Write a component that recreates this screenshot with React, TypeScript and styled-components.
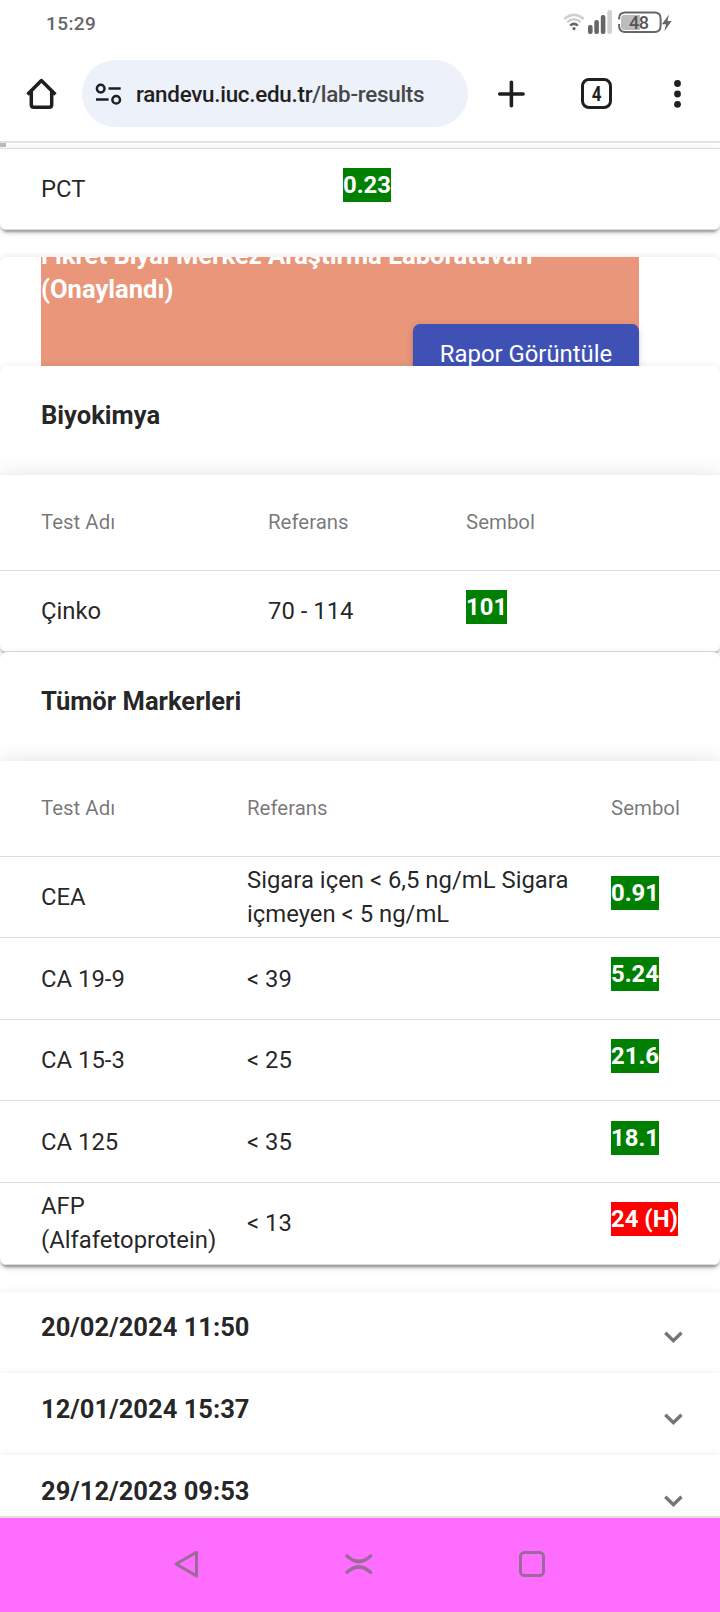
import React from 'react';
import styled, { createGlobalStyle } from 'styled-components';

const GlobalStyle = createGlobalStyle`
  * { box-sizing: border-box; }
  html, body { margin: 0; padding: 0; background: #fff; }
  body { font-family: Roboto, "Liberation Sans", sans-serif; color: rgba(0, 0, 0, 0.87); }
`;

const Screen = styled.div`
  display: flex;
  flex-direction: column;
  width: 720px;
  height: 1612px;
  overflow: hidden;
  background: #fff;
`;

const StatusBar = styled.div`
  display: flex;
  justify-content: space-between;
  height: 45px;
  padding: 0 46px 0 46px;
  flex: none;
`;

const Clock = styled.div`
  font-size: 19px;
  font-weight: 500;
  line-height: 47px;
  letter-spacing: 0.4px;
  color: #666;
`;

const StatusIcons = styled.div`
  display: flex;
  align-items: flex-start;
  padding-top: 8px;
`;

const Battery = styled.div`
  position: relative;
  width: 56px;
  height: 28px;
  margin-left: 5px;
`;

const BatteryLevel = styled.span`
  position: absolute;
  left: 11px;
  top: 0;
  font-size: 18px;
  font-weight: 500;
  line-height: 30px;
  letter-spacing: -0.5px;
  color: #555;
`;

const Toolbar = styled.div`
  display: flex;
  align-items: center;
  height: 98px;
  padding: 1px 0 0 24px;
  flex: none;
  border-bottom: 2px solid #e1e2e1;
`;

const AddressBar = styled.div`
  display: flex;
  align-items: center;
  width: 386px;
  height: 67px;
  margin: 0 26px 0 22px;
  padding-left: 12px;
  border-radius: 34px;
  background: #ecf1fa;
`;

const Url = styled.div`
  margin-left: 12px;
  font-size: 22.4px;
  font-weight: 500;
  line-height: 30px;
  letter-spacing: -0.26px;
  white-space: nowrap;
  color: #1f1f1f;
`;

const UrlPath = styled.span`
  color: #454846;
`;

const TabCount = styled.div`
  display: flex;
  align-items: center;
  justify-content: center;
  width: 31px;
  height: 31px;
  margin: 0 61px 0 52px;
  border: 3.5px solid #1f1f1f;
  border-radius: 8px;
  color: #1f1f1f;
`;

const TabNumber = styled.span`
  font-size: 20px;
  font-weight: 700;
  line-height: 24px;
  transform: scaleX(0.85);
`;

const Page = styled.main`
  flex: 1;
  min-height: 0;
  overflow: hidden;
  display: flex;
  flex-direction: column;
`;

const ScrollTrack = styled.div`
  height: 5px;
  flex: none;
`;

const ScrollThumb = styled.div`
  width: 6px;
  height: 4px;
  background: #bdbdbd;
`;

const raisedShadow = `
  0 5px 2px -3px rgba(0, 0, 0, 0.2),
  0 3px 3px 0 rgba(0, 0, 0, 0.14),
  0 2px 9px 0 rgba(0, 0, 0, 0.12)`;

const softShadow = '0 0 7px 0 rgba(0, 0, 0, 0.1)';

const Panel = styled.section<{ $corners?: string; $gap?: number; $soft?: boolean }>`
  position: relative;
  flex: none;
  margin-bottom: ${p => p.$gap ?? 0}px;
  border-radius: ${p => p.$corners ?? '7px'};
  background: #fff;
  box-shadow: ${p => (p.$soft ? softShadow : raisedShadow)};
`;

const PanelClip = styled.div`
  overflow: hidden;
  border-radius: inherit;
`;

const ReportHeader = styled.header`
  display: flex;
  align-items: center;
  height: 109px;
  padding: 0 41px;
  overflow: hidden;
`;

const ReportBanner = styled.div`
  display: flex;
  flex-direction: column;
  flex: none;
  width: 598px;
  background: #e9967a;
`;

const ReportTitle = styled.h3`
  width: 560px;
  margin: 0 0 18px;
  font-size: 25.57px;
  font-weight: 700;
  line-height: 34.1px;
  color: #fff;
`;

const ReportButton = styled.button`
  align-self: flex-end;
  width: 226px;
  height: 61px;
  padding: 0 0 2px;
  border: 0;
  border-radius: 7px;
  background: #3f51b5;
  color: #fff;
  font-family: inherit;
  font-size: 23.87px;
  line-height: 58px;
  box-shadow: ${raisedShadow};
`;

const GroupTitle = styled.h4`
  height: 109px;
  margin: 0;
  padding-left: 41px;
  font-size: 25.57px;
  font-weight: 700;
  line-height: 99px;
`;

const Table = styled.div`
  background: #fff;
  box-shadow:
    0 9px 9px -5px rgba(0, 0, 0, 0.2),
    0 14px 17px 2px rgba(0, 0, 0, 0.14),
    0 5px 24px 3px rgba(0, 0, 0, 0.12);
`;

const HeadRow = styled.div<{ $columns: string }>`
  display: grid;
  grid-template-columns: ${p => p.$columns};
  align-items: center;
  height: 96px;
  padding: 0 0 2px 41px;
  border-bottom: 1px solid #dedede;
`;

const Row = styled.div<{ $columns: string; $height?: number; $offset?: number; $topLine?: boolean }>`
  display: grid;
  grid-template-columns: ${p => p.$columns};
  grid-template-rows: 80px;
  height: ${p => p.$height ?? 82}px;
  padding: ${p => p.$offset ?? 0}px 0 0 41px;
  border-bottom: 1px solid #dedede;
  border-top: ${p => (p.$topLine ? '1px solid #dedede' : '0')};
`;

const HeadCell = styled.div`
  font-size: 20.46px;
  line-height: 34px;
  color: rgba(0, 0, 0, 0.54);
`;

const Cell = styled.div`
  align-self: center;
  padding-top: 0.4px;
  font-size: 23.87px;
  line-height: 34px;
`;

const Result = styled.div<{ $high?: boolean }>`
  justify-self: start;
  height: 34px;
  margin-top: 19px;
  font-size: 23.87px;
  font-weight: 700;
  line-height: 34px;
  white-space: nowrap;
  color: #fff;
  background: ${p => (p.$high ? '#ff0000' : '#008000')};
`;

const DatePanel = styled(Panel)<{ $height: number }>`
  height: ${p => p.$height}px;
`;

const DateHeader = styled.header<{ $top: number }>`
  display: flex;
  justify-content: space-between;
  padding: ${p => p.$top}px 37px 0 41px;
`;

const DateTitle = styled.h3`
  margin: 0;
  font-size: 25.57px;
  font-weight: 700;
  line-height: 35px;
`;

const Chevron = styled.svg`
  width: 20px;
  height: 14px;
  margin-top: 20px;
`;

const NavBar = styled.nav`
  display: flex;
  align-items: center;
  justify-content: space-between;
  height: 96px;
  padding: 0 172px 2px 170px;
  flex: none;
  position: relative;
  border-top: 2px solid #dfdfdf;
  background: #ff6dff;
`;

type Test = {
  name: string;
  reference: string;
  value: string;
  high?: boolean;
  height?: number;
  offset?: number;
};

const ResultGroup = ({ title, columns, tests }: {
  title: string; columns: string; tests: Test[];
}) => (
  <Panel>
    <PanelClip>
      <GroupTitle>{title}</GroupTitle>
      <Table>
        <HeadRow $columns={columns}>
          <HeadCell>Test Adı</HeadCell>
          <HeadCell>Referans</HeadCell>
          <HeadCell>Sembol</HeadCell>
        </HeadRow>
        {tests.map(t => (
          <Row key={t.name} $columns={columns} $height={t.height} $offset={t.offset}>
            <Cell>{t.name}</Cell>
            <Cell>{t.reference}</Cell>
            <Result $high={t.high}>{t.value}</Result>
          </Row>
        ))}
      </Table>
    </PanelClip>
  </Panel>
);

const biochemistry: Test[] = [
  { name: 'Çinko', reference: '70 - 114', value: '101', height: 81 },
];

const tumorMarkers: Test[] = [
  { name: 'CEA', reference: 'Sigara içen < 6,5 ng/mL Sigara içmeyen < 5 ng/mL', value: '0.91', height: 81 },
  { name: 'CA 19-9', reference: '< 39', value: '5.24', offset: 0.4 },
  { name: 'CA 15-3', reference: '< 25', value: '21.6', height: 81 },
  { name: 'CA 125', reference: '< 35', value: '18.1', offset: 0.8 },
  { name: 'AFP (Alfafetoprotein)', reference: '< 13', value: '24 (H)', high: true },
];

const olderDates = [
  { label: '20/02/2024 11:50', height: 81, top: 18 },
  { label: '12/01/2024 15:37', height: 82, top: 19 },
  { label: '29/12/2023 09:53', height: 82, top: 19 },
];

const SignalSvg = styled.svg`
  margin-left: 3px;
`;

const WifiIcon = () => (
  <svg width="22" height="24" viewBox="0 0 22 24" fill="none">
    <path d="M1.2 11 Q11 2.6 20.8 11" stroke="#d0d0d0" strokeWidth="2.6" />
    <path d="M4.3 14.2 Q11 8.4 17.7 14.2" stroke="#d0d0d0" strokeWidth="2.4" />
    <path d="M7.2 17.6 Q11 14.2 14.8 17.6" stroke="#666" strokeWidth="2.5" />
    <circle cx="11" cy="20.6" r="1.6" fill="#666" />
  </svg>
);

const SignalIcon = () => (
  <SignalSvg width="25" height="28" viewBox="0 0 25 28">
    <rect x="0" y="17" width="4.6" height="9" rx="2" fill="#666" />
    <rect x="6.3" y="12" width="4.6" height="14" rx="2" fill="#666" />
    <rect x="12.8" y="7" width="4.6" height="19" rx="2" fill="#666" />
    <rect x="19.3" y="2" width="4.7" height="24" rx="2" fill="#d0d0d0" />
  </SignalSvg>
);

const BatteryIcon = () => (
  <Battery>
    <svg width="56" height="28" viewBox="0 0 56 28" fill="none">
      <path d="M6.5 7 H22 V22 H6.5 a3.5 3.5 0 0 1 -3.5 -3.5 v-8 a3.5 3.5 0 0 1 3.5 -3.5" fill="#bcbcbc" />
      <path d="M1.1 11.5 v-1 q0 -6 6 -6 h29.5 q6 0 6 6 v7.5 q0 6 -6 6 h-29.5 q-6 0 -6 -6 v-2" stroke="#666" strokeWidth="2" />
      <path d="M51 6.5 L43.8 16.2 H48 L46.300 23.2 L53.600 13 H49.4 Z" fill="#666" />
    </svg>
    <BatteryLevel>48</BatteryLevel>
  </Battery>
);

const HomeIcon = () => (
  <svg width="36" height="36" viewBox="0 0 36 36" fill="none" stroke="#1f1f1f" strokeWidth="3.5">
    <path d="M3.5 18.6 L17.4 4.600 L31.4 18.6" strokeLinejoin="round" />
    <path d="M7.3 15 V28.7 q0 2.5 2.5 2.5 H25.2 q2.5 0 2.5 -2.5 V15" />
  </svg>
);

const SiteSettingsIcon = () => (
  <svg width="30" height="26" viewBox="0 0 30 26" fill="none" stroke="#1f1f1f" strokeWidth="2.5">
    <circle cx="6.7" cy="7.6" r="3.8" />
    <path d="M14.5 7.6 H26.7 M2 18.6 H14.600" />
    <circle cx="22.2" cy="18.8" r="3.8" />
  </svg>
);

const PlusIcon = () => (
  <svg width="35" height="36" viewBox="0 0 35 36" stroke="#1f1f1f" strokeWidth="3.6" strokeLinecap="round">
    <path d="M17.4 6.3 V29.7 M5.7 18 H29.1" />
  </svg>
);

const MenuIcon = () => (
  <svg width="9" height="32" viewBox="0 0 9 32" fill="#1f1f1f">
    <circle cx="4.5" cy="5.5" r="3.4" />
    <circle cx="4.5" cy="16" r="3.4" />
    <circle cx="4.5" cy="26.3" r="3.4" />
  </svg>
);

const navStroke = { fill: 'none', stroke: '#9b6a9b', strokeWidth: 3 } as const;

export default function App() {
  return (
    <>
      <GlobalStyle />
      <Screen>
        <StatusBar>
          <Clock>15:29</Clock>
          <StatusIcons>
            <WifiIcon />
            <SignalIcon />
            <BatteryIcon />
          </StatusIcons>
        </StatusBar>
        <Toolbar>
          <HomeIcon />
          <AddressBar>
            <SiteSettingsIcon />
            <Url>randevu.iuc.edu.tr<UrlPath>/lab-results</UrlPath></Url>
          </AddressBar>
          <PlusIcon />
          <TabCount><TabNumber>4</TabNumber></TabCount>
          <MenuIcon />
        </Toolbar>

        <Page>
          <ScrollTrack><ScrollThumb /></ScrollTrack>
          <Panel $corners="0 0 7px 7px" $gap={27}>
            <PanelClip>
              <Row $columns="302px 1fr" $topLine>
                <Cell>PCT</Cell>
                <Result>0.23</Result>
              </Row>
            </PanelClip>
          </Panel>

          <Panel $gap={27} $soft>
            <ReportHeader>
              <ReportBanner>
                <ReportTitle>Fikret Biyal Merkez Araştırma Laboratuvarı (Onaylandı)</ReportTitle>
                <ReportButton>Rapor Görüntüle</ReportButton>
              </ReportBanner>
            </ReportHeader>
            <ResultGroup title="Biyokimya" columns="227px 198px 1fr" tests={biochemistry} />
            <ResultGroup title="Tümör Markerleri" columns="206px 364px 1fr" tests={tumorMarkers} />
          </Panel>

          {olderDates.map(d => (
            <DatePanel key={d.label} $corners="0" $height={d.height}>
              <DateHeader $top={d.top}>
                <DateTitle>{d.label}</DateTitle>
                <Chevron viewBox="0 0 20 14" fill="none" stroke="#757575" strokeWidth="3.4">
                  <path d="M2.3 2.8 L10.400 10.600 L18.5 2.8" />
                </Chevron>
              </DateHeader>
            </DatePanel>
          ))}
        </Page>

        <NavBar>
          <svg width="32" height="32" viewBox="0 0 32 32" {...navStroke} strokeLinejoin="round">
            <path d="M6 16 L26.500 4.2 V27.9 Z" />
          </svg>
          <svg width="34" height="32" viewBox="0 0 34 32" {...navStroke} strokeWidth={3.6} strokeLinecap="round">
            <path d="M5 8 Q16.800 19 28.600 8 M5 24.300 Q16.800 13.300 28.600 24.300" />
          </svg>
          <svg width="32" height="32" viewBox="0 0 32 32" {...navStroke}>
            <rect x="4.5" y="4.5" width="23" height="23" rx="4" />
          </svg>
        </NavBar>
      </Screen>
    </>
  );
}
